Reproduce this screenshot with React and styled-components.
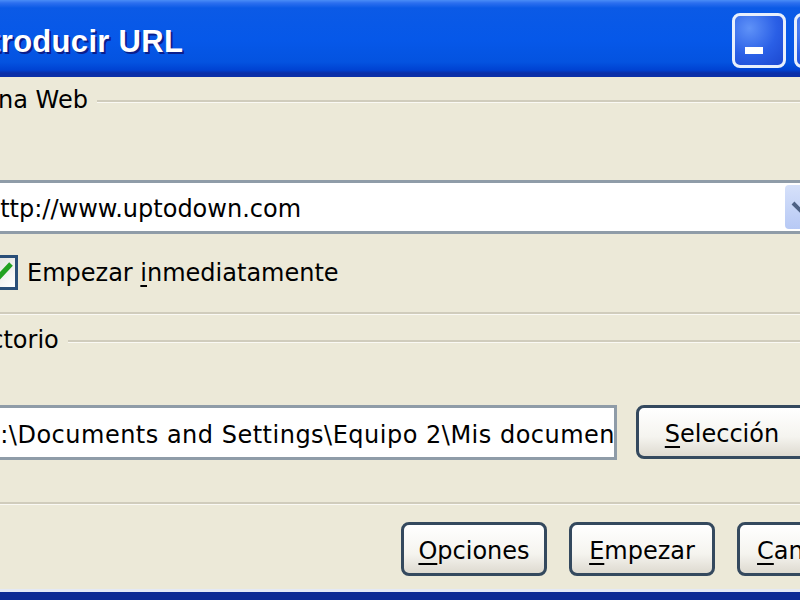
import React from "react";
import styled, { createGlobalStyle } from "styled-components";

const GlobalStyle = createGlobalStyle`
  html, body {
    margin: 0;
    padding: 0;
    background: #ece9d8;
    overflow: hidden;
  }
  body {
    font-family: "DejaVu Sans", "Noto Sans", sans-serif;
  }
`;

function App() {
    return (
        <Viewport>
            <GlobalStyle />
            <Window>
                <TitleBar>
                    <Title>Introducir URL</Title>
                    <Controls>
                        <CaptionButton>
                            <MinDash />
                        </CaptionButton>
                        <CaptionButton />
                        <CaptionButton $close />
                    </Controls>
                </TitleBar>
                <Body>
                    <GroupHeader>
                        <span>Página Web</span>
                        <Rule />
                    </GroupHeader>
                    <Combo>
                        <ComboText>http://www.uptodown.com</ComboText>
                        <DropButton>
                            <svg width="20" height="20" viewBox="0 0 20 20">
                                <path d="M3 6 L10 13 L17 6" fill="none" stroke="#4d6185" strokeWidth="4" />
                            </svg>
                        </DropButton>
                    </Combo>
                    <CheckRow>
                        <CheckBox>
                            <svg width="29" height="29" viewBox="0 0 29 29">
                                <path d="M3 14 L10 22 L25 6" fill="none" stroke="#21a121" strokeWidth="5" />
                            </svg>
                        </CheckBox>
                        <span>Empezar <u>i</u>nmediatamente</span>
                    </CheckRow>
                    <Separator $top={22} />
                    <GroupHeader $top={11} $shift={-7}>
                        <span>Directorio</span>
                        <Rule />
                    </GroupHeader>
                    <PathRow>
                        <Field>{"C:\\Documents and Settings\\Equipo 2\\Mis documentos"}</Field>
                        <Button $width={172}><u>S</u>elección</Button>
                    </PathRow>
                    <Separator $top={42} />
                    <ButtonRow>
                        <Button><u>O</u>pciones</Button>
                        <Button><u>E</u>mpezar</Button>
                        <Button><u>C</u>ancelar</Button>
                    </ButtonRow>
                </Body>
            </Window>
        </Viewport>
    );
}

export default App;

const Viewport = styled.div`
    width: 800px;
    height: 600px;
    overflow: hidden;
`;

const Window = styled.div`
    width: 980px;
    height: 600px;
    margin-left: -60px;
    display: flex;
    flex-direction: column;
    background: #ece9d8;
    border-bottom: 8px solid #0c2a94;
    box-sizing: border-box;
`;

const TitleBar = styled.div`
    height: 77px;
    flex-shrink: 0;
    display: flex;
    align-items: center;
    padding: 0 10px 0 22px;
    background: linear-gradient(
        to bottom,
        #4a8df7 0px,
        #2c6fef 3px,
        #0b5ae6 8px,
        #0658e9 40px,
        #0453e0 62px,
        #0042d2 70px,
        #0a2fa8 73px,
        #0a2fa8 77px
    );
`;

const Title = styled.div`
    flex: 1;
    padding-top: 6px;
    font-family: "Liberation Sans", Arial, sans-serif;
    font-weight: bold;
    font-size: 31px;
    letter-spacing: 0.3px;
    color: #fff;
    text-shadow: 2px 2px 0 #0a1e8c;
    white-space: nowrap;
`;

const Controls = styled.div`
    display: flex;
    gap: 8px;
    margin-top: 4px;
`;

const CaptionButton = styled.div`
    width: 54px;
    height: 55px;
    box-sizing: border-box;
    border: 3px solid #e8effc;
    border-radius: 8px;
    display: flex;
    align-items: flex-end;
    padding: 0 0 11px 10px;
    background: ${(p) =>
        p.$close
            ? "radial-gradient(circle at 30% 30%, #f0a080, #d8471d 70%)"
            : "radial-gradient(circle at 30% 25%, #5f92f8, #2a5fe6 55%, #1c48d0)"};
`;

const MinDash = styled.div`
    width: 18px;
    height: 7px;
    background: #fff;
`;

const Body = styled.div`
    flex: 1;
    display: flex;
    flex-direction: column;
    padding: 9px 37px 0 8px;
    border-bottom: 3px solid #e4e9f5;
    font-size: 24px;
    color: #000;

    u {
        text-decoration-thickness: 2px;
        text-underline-offset: 4px;
    }
`;

const GroupHeader = styled.div`
    display: flex;
    align-items: center;
    gap: 9px;
    height: 28px;
    margin: ${(p) => p.$top || 0}px -37px 0 ${(p) => p.$shift || 0}px;
    white-space: nowrap;
`;

const Rule = styled.div`
    flex: 1;
    height: 0;
    border-top: 2px solid #d0ccbc;
    border-bottom: 1px solid #faf9f4;
    margin-top: 2px;
`;

const Combo = styled.div`
    margin: 66px 0 0 24px;
    width: 848px;
    height: 54px;
    box-sizing: border-box;
    border: 3px solid #8f9ca8;
    background: #fff;
    display: flex;
    align-items: center;
`;

const ComboText = styled.div`
    flex: 1;
    padding: 4px 0 0 10px;
    white-space: nowrap;
`;

const DropButton = styled.div`
    width: 30px;
    align-self: stretch;
    margin: 2px;
    border-radius: 4px;
    background: linear-gradient(to bottom, #d6e1fa, #b7c9f5);
    display: flex;
    align-items: center;
    justify-content: center;
`;

const CheckRow = styled.div`
    margin: 21px 0 0 35px;
    display: flex;
    align-items: center;
    gap: 9px;
    height: 35px;
`;

const CheckBox = styled.div`
    width: 35px;
    height: 35px;
    box-sizing: border-box;
    border: 3px solid #2a4f78;
    background: linear-gradient(135deg, #dcdcd7, #fff);
    display: flex;
    align-items: center;
    justify-content: center;
`;

const Separator = styled.div`
    margin: ${(p) => p.$top}px -37px 0 -8px;
    height: 0;
    border-top: 2px solid #d0ccbc;
    border-bottom: 1px solid #faf9f4;
`;

const PathRow = styled.div`
    margin: 51px 0 0 24px;
    display: flex;
    gap: 19px;
    height: 55px;
`;

const Field = styled.div`
    width: 645px;
    box-sizing: border-box;
    border: 3px solid #8f9ca8;
    background: #fff;
    padding: 4px 0 0 8px;
    display: flex;
    align-items: center;
    white-space: nowrap;
    overflow: hidden;
    letter-spacing: 0.5px;
`;

const Button = styled.div`
    width: ${(p) => p.$width || 146}px;
    height: 54px;
    flex-shrink: 0;
    box-sizing: border-box;
    border: 3px solid #34495e;
    border-radius: 8px;
    background: linear-gradient(to bottom, #ffffff, #f5f4ef 60%, #dedad0);
    display: flex;
    align-items: center;
    justify-content: center;
    padding-top: 3px;
    white-space: nowrap;
`;

const ButtonRow = styled.div`
    margin-top: 17px;
    display: flex;
    justify-content: flex-end;
    gap: 22px;
`;
